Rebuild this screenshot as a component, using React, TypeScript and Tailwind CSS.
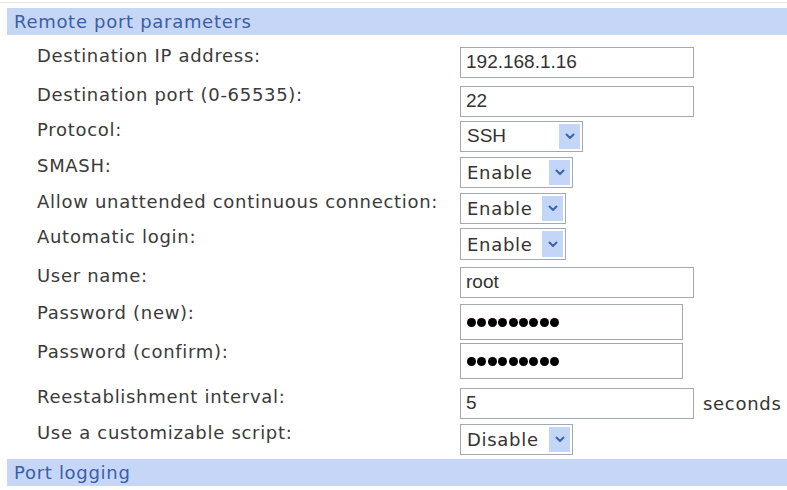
import React from 'react';

type Field =
  | { kind: 'text'; label: string; value: string; width: number; height: number; rowH: number; suffix?: string }
  | { kind: 'password'; label: string; width: number; height: number; rowH: number }
  | { kind: 'select'; label: string; value: string; width: number; height: number; rowH: number };

const fields: Field[] = [
  { kind: 'text', label: 'Destination IP address:', value: '192.168.1.16', width: 234, height: 31, rowH: 39 },
  { kind: 'text', label: 'Destination port (0-65535):', value: '22', width: 234, height: 31, rowH: 35 },
  { kind: 'select', label: 'Protocol:', value: 'SSH', width: 123, height: 31, rowH: 36 },
  { kind: 'select', label: 'SMASH:', value: 'Enable', width: 113, height: 31, rowH: 36 },
  { kind: 'select', label: 'Allow unattended continuous connection:', value: 'Enable', width: 106, height: 31, rowH: 35 },
  { kind: 'select', label: 'Automatic login:', value: 'Enable', width: 106, height: 32, rowH: 39 },
  { kind: 'text', label: 'User name:', value: 'root', width: 234, height: 31, rowH: 37 },
  { kind: 'password', label: 'Password (new):', width: 223, height: 36, rowH: 39 },
  { kind: 'password', label: 'Password (confirm):', width: 223, height: 36, rowH: 45 },
  { kind: 'text', label: 'Reestablishment interval:', value: '5', width: 234, height: 31, rowH: 36, suffix: 'seconds' },
  { kind: 'select', label: 'Use a customizable script:', value: 'Disable', width: 113, height: 31, rowH: 35 },
];

function SectionHeader({ title }: { title: string }) {
  return (
    <div className="ml-[7px] h-[27px] bg-[#c6d6f6] pl-[7px] flex items-center text-[#3c5ea6] text-[18px] tracking-[0.7px]">
      {title}
    </div>
  );
}

function Chevron() {
  return (
    <svg width="10" height="7" viewBox="0 0 10 7" fill="none">
      <path d="M1.5 1.5L5 5L8.5 1.5" stroke="#3d62b0" strokeWidth="2" strokeLinecap="round" strokeLinejoin="round" />
    </svg>
  );
}

function Control({ field }: { field: Field }) {
  const box = 'border border-[#a3a9b1] bg-white flex items-center';
  if (field.kind === 'select') {
    return (
      <div className={box} style={{ width: field.width, height: field.height }}>
        <span className="flex-1 pl-[6px] text-[#333] text-[18px] tracking-[0.7px]" style={field.value === 'SSH' ? { fontFamily: '"Liberation Sans", Arial, sans-serif', fontSize: 19, letterSpacing: 0 } : undefined}>
          {field.value}
        </span>
        <div className="w-[21px] h-[calc(100%-4px)] mr-[2px] bg-[#c4d6f7] flex items-center justify-center">
          <Chevron />
        </div>
      </div>
    );
  }
  if (field.kind === 'password') {
    return (
      <div className={`${box} pl-[6px] gap-[1.4px]`} style={{ width: field.width, height: field.height }}>
        {Array.from({ length: 9 }).map((_, i) => (
          <div key={i} className="w-[9px] h-[9px] rounded-full bg-black" />
        ))}
      </div>
    );
  }
  return (
    <div className="flex items-center">
      <div className={`${box} pl-[5px] font-['Liberation_Sans',Arial,sans-serif] text-[19px] text-[#333]`} style={{ width: field.width, height: field.height }}>
        {field.value}
      </div>
      {field.suffix && <span className="ml-[9px] text-[18px] tracking-[0.7px] text-[#333]">{field.suffix}</span>}
    </div>
  );
}

export default function App() {
  return (
    <div className="w-[787px] h-[490px] bg-white overflow-hidden font-['DejaVu_Sans',Verdana,sans-serif]">
      <div className="mt-[2px] border-t border-[#e8e4dc]" />
      <div className="mt-[5px]">
        <SectionHeader title="Remote port parameters" />
      </div>
      <div className="pl-[37px] pt-[12px]">
        {fields.map((f) => (
          <div key={f.label} className="flex items-start" style={{ height: f.rowH }}>
            <div className="w-[423px] leading-[18px] text-[18px] tracking-[0.7px] text-[#3a3a3a]">{f.label}</div>
            <Control field={f} />
          </div>
        ))}
      </div>
      <SectionHeader title="Port logging" />
    </div>
  );
}
